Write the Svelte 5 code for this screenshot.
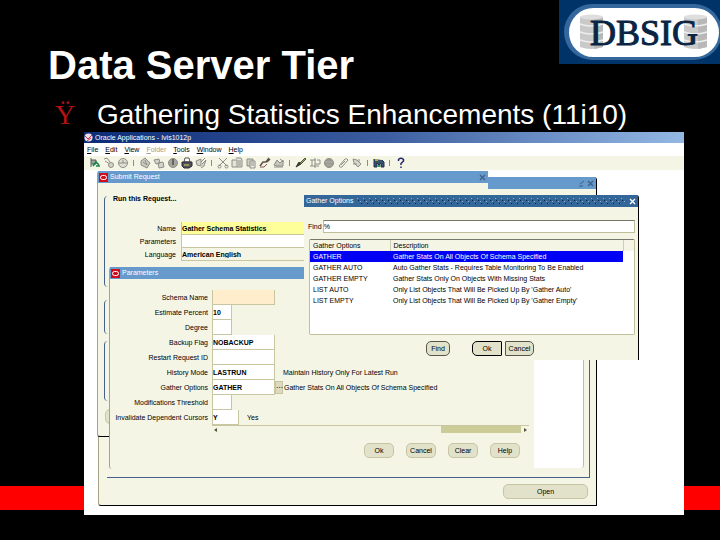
<script lang="ts">
    const menus = ['File', 'Edit', 'View', 'Folder', 'Tools', 'Window', 'Help'];

    const toolGroups = [
        ['new', 'find', 'clock'],
        ['save', 'step', 'responsibility', 'print', 'close'],
        ['cut', 'copy', 'paste', 'clear', 'delete'],
        ['edit', 'zoom', 'globe', 'attach', 'tools'],
        ['folder'],
        ['help'],
    ];

    const requestFields = [
        { id: 'name', label: 'Name', value: 'Gather Schema Statistics', kind: 'required' },
        { id: 'parameters', label: 'Parameters', value: '', kind: '' },
        { id: 'language', label: 'Language', value: 'American English', kind: 'locked' },
    ];

    const parameters = [
        { id: 'schema', label: 'Schema Name', value: '', size: 'wide', kind: 'active', note: '' },
        { id: 'percent', label: 'Estimate Percent', value: '10', size: 'narrow', kind: '', note: '' },
        { id: 'degree', label: 'Degree', value: '', size: 'narrow', kind: '', note: '' },
        { id: 'backup', label: 'Backup Flag', value: 'NOBACKUP', size: 'wide', kind: '', note: '' },
        { id: 'restart', label: 'Restart Request ID', value: '', size: 'wide', kind: '', note: '' },
        { id: 'history', label: 'History Mode', value: 'LASTRUN', size: 'wide', kind: '', note: 'Maintain History Only For Latest Run' },
        { id: 'options', label: 'Gather Options', value: 'GATHER', size: 'wide', kind: 'picker', note: 'Gather Stats On All Objects Of Schema Specified' },
        { id: 'threshold', label: 'Modifications Threshold', value: '', size: 'narrow', kind: '', note: '' },
        { id: 'invalidate', label: 'Invalidate Dependent Cursors', value: 'Y', size: 'short', kind: '', note: 'Yes' },
    ];

    const options = [
        ['GATHER', 'Gather Stats On All Objects Of Schema Specified'],
        ['GATHER AUTO', 'Auto Gather Stats - Requires Table Monitoring To Be Enabled'],
        ['GATHER EMPTY', 'Gather Stats Only On Objects With Missing Stats'],
        ['LIST AUTO', "Only List Objects That Will Be Picked Up By 'Gather Auto'"],
        ['LIST EMPTY', "Only List Objects That Will Be Picked Up By 'Gather Empty'"],
    ];

    let selected = $state(0);
</script>

{#snippet oracle()}
    <svg class="oracle" viewBox="0 0 9 9" aria-hidden="true">
        <rect width="9" height="9" fill="#cc1020" />
        <rect x="1.5" y="2.5" width="6" height="4" rx="2" fill="none" stroke="#fff" />
    </svg>
{/snippet}

{#snippet cross()}
    <svg class="cross" viewBox="0 0 7 7" aria-hidden="true">
        <path d="M1 1l5 5M6 1L1 6" stroke="currentColor" stroke-width="1.3" />
    </svg>
{/snippet}

{#snippet cylinder(x: number)}
    <g transform="translate({x} 14)">
        <path d="M0 3v30q11 4 23 0V3z" fill="#c9c9c9" />
        <path d="M14 3h9v30q-4 1-9 2z" fill="#b8b8b8" />
        <ellipse cx="11.5" cy="3" rx="11.5" ry="2.5" fill="#dedede" />
        <path d="M0 10q11 4 23 0M0 18q11 4 23 0M0 26q11 4 23 0" fill="none" stroke="#eee" stroke-width="1.5" />
    </g>
{/snippet}

{#snippet toolIcon(name: string)}
    <svg viewBox="0 0 12 12" fill="none" stroke="#8e8e86" aria-hidden="true">
        {#if name === 'new'}
            <path d="M2 1v9M2 3h5v4H2" stroke="#55605a" fill="#9ba49d" />
            <path d="M4 9l3-4 3 3M7 9h4" stroke="#16864a" stroke-width="1.6" />
        {:else if name === 'find'}
            <path d="M1 2l3-1 3 4M2 4l5 3" />
            <circle cx="8" cy="8" r="2.5" fill="#d4d4cb" />
        {:else if name === 'clock'}
            <circle cx="6" cy="6" r="4.5" fill="#deded6" />
            <path d="M2 6h8M6 3v3" />
        {:else if name === 'save'}
            <path d="M2 4l4-3 5 5-3 5-6-3z" fill="#c9c9c0" />
            <path d="M4 5l4 3M6 3l2 5" />
        {:else if name === 'step'}
            <path d="M1 3l5-1 1 4-4 1zM5 6l5-1 1 5-5 1z" fill="#d2d2ca" />
        {:else if name === 'responsibility'}
            <circle cx="6" cy="6" r="4.5" fill="#a5a59f" />
            <path d="M5 2h2v6H5z" fill="#66665f" stroke="none" />
        {:else if name === 'print'}
            <path d="M4 1h4l1 4H3z" fill="#fff" stroke="#555" />
            <path d="M1 5h10v4l-3 2H3L1 9z" fill="#54545f" stroke="#292937" />
            <path d="M3 8h5" stroke="#d6cf51" />
        {:else if name === 'close'}
            <path d="M1 4l5-2v7L2 8zM6 5l4-4M7 7l4-4-2 6-3 2" fill="#d5d5cd" />
        {:else if name === 'cut'}
            <path d="M2 1l8 8M10 1L2 9" />
            <circle cx="2.5" cy="9.5" r="1.5" />
            <circle cx="9.5" cy="9.5" r="1.5" />
        {:else if name === 'copy'}
            <path d="M1 3h5v7H1zM5 1h5l1 2v7H6" fill="#e4e4dc" />
            <path d="M7 4h3M7 6h3M7 8h3" />
        {:else if name === 'paste'}
            <path d="M2 2h6v7H2z" fill="#cfcfc6" />
            <path d="M5 4h5v7H5z" fill="#ecece4" />
            <path d="M6 6h3M6 8h3" />
        {:else if name === 'clear'}
            <path d="M1 9l3-4h3l3-4M8 5l3-3" stroke="#5e5145" stroke-width="1.5" />
            <path d="M1 10h4l3-3" stroke="#8b4c45" />
        {:else if name === 'delete'}
            <path d="M1 8l3-5 3 3 3-3v6H4z" fill="#c5c5bd" />
            <path d="M1 10h9M7 2l4 3" />
        {:else if name === 'edit'}
            <path d="M1 10l3-5 2 2z" fill="#38382e" stroke="#38382e" />
            <path d="M5 6l5-5 1 1-5 5" fill="#93a36c" stroke="#4f5c3c" />
        {:else if name === 'zoom'}
            <path d="M1 3h6M1 9h9M3 3v6M6 1v10M8 3h3v4H6" />
        {:else if name === 'globe'}
            <circle cx="6" cy="6" r="4.5" fill="#9c9c94" />
            <path d="M2 5h8M3 8h6" stroke="#adada5" />
        {:else if name === 'attach'}
            <path d="M2 9l6-7q2-1 3 1L5 10q-2 1-3-1zM4 8l4-4" />
        {:else if name === 'tools'}
            <path d="M2 2l4 1 4 4-3 3-4-4zM2 7h4M8 2v3" fill="#d5d5cc" />
        {:else if name === 'folder'}
            <path d="M1 2v8h3V6l2 2 2-2v4h3V5L9 3" fill="#39506c" stroke="#22304e" />
            <path d="M2 3h3" stroke="#b6ad29" stroke-width="2" />
            <path d="M6 10V8" stroke="#1e9a64" stroke-width="2" />
        {:else}
            <path d="M3.5 4V2.5Q6 0 8.5 2.5V4L6 6.5V8M6 9.5V11" stroke="#26266e" stroke-width="1.5" />
        {/if}
    </svg>
{/snippet}

<main class="slide">
    <div class="band"></div>

    <header>
        <h1>Data Server Tier</h1>
        <svg class="logo" viewBox="0 0 161 64" role="img" aria-label="DBSIG">
            <rect width="161" height="64" fill="#003468" />
            <rect x="5" y="4" width="158" height="56" rx="28" fill="#34689c" />
            <rect x="10" y="8" width="150" height="49" rx="24.5" fill="#fff" />
            {@render cylinder(21)}
            {@render cylinder(125)}
            <text x="31" y="45">DBSIG</text>
        </svg>
    </header>

    <p class="bullet"><span class="mark">Ÿ</span>Gathering Statistics Enhancements (11i10)</p>

    <section class="screen">
        <div class="app-title">
            <svg viewBox="0 0 9 9" aria-hidden="true">
                <circle cx="4.5" cy="4.5" r="4" fill="#f0dce4" />
                <path d="M1 3l3 3 4-4M3 8l4-3" fill="none" stroke="#bd3455" />
            </svg>
            <span>Oracle Applications - Ivis1012p</span>
        </div>

        <nav class="menu">
            {#each menus as menu}
                <button class:disabled={menu === 'Folder'}><u>{menu[0]}</u>{menu.slice(1)}</button>
            {/each}
        </nav>

        <div class="toolbar">
            {#each toolGroups as group, i}
                {#if i > 0}<i></i>{/if}
                {#each group as name}
                    <button aria-label={name}>{@render toolIcon(name)}</button>
                {/each}
            {/each}
        </div>

        <div class="desktop">
            <div class="window requests">
                <div class="bar">
                    <svg class="cross" viewBox="0 0 7 7" aria-hidden="true">
                        <path d="M1 6h4M2 4l4-3" stroke="currentColor" />
                    </svg>
                    {@render cross()}
                </div>
                <div class="frame">
                    <div class="sheet"></div>
                </div>
                <button class="pill open">Open</button>
            </div>

            <div class="window submit">
                <div class="bar">
                    {@render oracle()}
                    <span>Submit Request</span>
                    {@render cross()}
                </div>
                <div class="group run">
                    <h2>Run this Request...</h2>
                    {#each requestFields as field}
                        <div class="line">
                            <label for={field.id}>{field.label}</label>
                            <input id={field.id} class={field.kind} value={field.value} />
                        </div>
                    {/each}
                </div>
                <div class="group at"></div>
                <div class="group upon"></div>
                <button class="pill corner" aria-label="Help"></button>
            </div>

            <div class="window params">
                <div class="bar">
                    {@render oracle()}
                    <span>Parameters</span>
                </div>
                <form>
                    {#each parameters as field}
                        <div class="line">
                            <label for={field.id}>{field.label}</label>
                            <input id={field.id} class="{field.size} {field.kind}" value={field.value} />
                            {#if field.kind === 'picker'}<button type="button" class="lov" aria-label="List of values">&#8943;</button>{/if}
                            <span class="note">{field.note}</span>
                        </div>
                    {/each}
                </form>
                <div class="scroll">
                    <svg viewBox="0 0 8 8" aria-hidden="true"><path d="M5 2v4L2 4z" fill="#555540" /></svg>
                    <div class="thumb"></div>
                    <svg viewBox="0 0 8 8" aria-hidden="true"><path d="M3 2v4l3-2z" fill="#555540" /></svg>
                </div>
                <div class="actions">
                    <button class="pill">Ok</button>
                    <button class="pill">Cancel</button>
                    <button class="pill">Clear</button>
                    <button class="pill">Help</button>
                </div>
            </div>

            <div class="window gather">
                <div class="bar">
                    <span>Gather Options</span>
                    <div class="dots"></div>
                    {@render cross()}
                </div>
                <div class="search">
                    <label for="find">Find</label>
                    <input id="find" value="%" />
                </div>
                <div class="list">
                    <table>
                        <thead>
                            <tr><th>Gather Options</th><th>Description</th><th></th></tr>
                        </thead>
                        <tbody>
                            {#each options as [code, text], i}
                                <tr class:selected={selected === i} onclick={() => (selected = i)}>
                                    <td>{code}</td><td>{text}</td><td></td>
                                </tr>
                            {/each}
                        </tbody>
                    </table>
                </div>
                <div class="actions">
                    <button class="pill search-again">Find</button>
                    <button class="pill default">Ok</button>
                    <button class="pill cancel">Cancel</button>
                </div>
            </div>
        </div>
    </section>
</main>

<style>
    :global(body) {
        margin: 0;
        background: #000;
    }
    * {
        box-sizing: border-box;
    }
    .slide {
        position: relative;
        display: flex;
        flex-direction: column;
        min-height: 100vh;
        padding-bottom: 25px;
        background: #000;
        color: #fff;
        font-family: "Liberation Sans", Arial, sans-serif;
    }
    .band {
        position: absolute;
        left: 0;
        right: 0;
        bottom: 30px;
        height: 24px;
        background: #f00;
    }
    header {
        display: flex;
        justify-content: space-between;
        align-items: flex-start;
    }
    h1 {
        margin: 42px 0 0 48px;
        font-size: 40px;
        line-height: 46px;
    }
    .logo {
        width: 161px;
        height: 64px;
    }
    .logo text {
        font-family: "Liberation Serif", "Times New Roman", serif;
        font-size: 36px;
        fill: #0a2443;
        stroke: #0a2443;
        stroke-width: 1;
    }
    .bullet {
        display: flex;
        margin: 10px 0 0 55px;
        font-size: 28px;
        line-height: 34px;
        white-space: nowrap;
    }
    .mark {
        width: 42px;
        color: #b51212;
        font-family: "Liberation Serif", "Times New Roman", serif;
    }
    .screen {
        position: relative;
        display: flex;
        flex: 1;
        flex-direction: column;
        margin: 0 36px 0 84px;
        background: #fff;
        color: #000;
        font-size: 7px;
        line-height: 10px;
    }
    button, input {
        margin: 0;
        padding: 0;
        border: 0;
        border-radius: 0;
        background: none;
        color: inherit;
        font: inherit;
    }
    .app-title {
        display: flex;
        align-items: center;
        gap: 2px;
        height: 11px;
        background: linear-gradient(90deg, #0c2c78, #3c5ea0 50%, #93b8e4);
        color: #fff;
    }
    .app-title svg {
        width: 9px;
        height: 9px;
    }
    .menu {
        display: flex;
        gap: 7px;
        height: 13px;
        padding-left: 3px;
    }
    .menu .disabled {
        color: #a5a184;
    }
    .toolbar {
        display: flex;
        align-items: center;
        height: 14px;
        padding-left: 4px;
        background: #f5f5e6;
    }
    .toolbar button {
        display: flex;
        justify-content: center;
        width: 14px;
    }
    .toolbar svg {
        width: 12px;
        height: 12px;
    }
    .toolbar i {
        width: 1px;
        height: 6px;
        margin: 0 4px 0 3px;
        background: #8f8f7c;
    }
    .desktop {
        position: relative;
        flex: 1;
    }
    .window {
        position: absolute;
        background: #f5f5e6;
        border-left: 1px solid #a5a384;
        border-radius: 3px 3px 0 3px;
    }
    .bar {
        display: flex;
        align-items: center;
        gap: 2px;
        height: 12px;
        padding-right: 2px;
        background: #6699cc;
        color: #fff;
    }
    .oracle {
        width: 9px;
        height: 9px;
        margin-left: 1px;
    }
    .cross {
        width: 7px;
        height: 7px;
        color: #3f6083;
    }
    .bar span + .cross {
        margin-left: auto;
    }
    .pill {
        height: 15px;
        border: 1px solid #c6c6a4;
        border-radius: 5px;
        background: #e2e2cb;
        text-align: center;
    }
    .line {
        display: flex;
        align-items: center;
    }
    .line label {
        text-align: right;
    }
    .line input {
        border: solid #c9c7a2;
        border-width: 0 1px 1px;
        background: #fff;
        font-weight: bold;
    }

    .requests {
        left: 14px;
        top: 7px;
        width: 499px;
        border-right: 1px solid #000;
        border-bottom: 1px solid #000;
    }
    .requests .bar {
        justify-content: flex-end;
    }
    .frame {
        display: flex;
        justify-content: flex-end;
        height: 269px;
        margin: 20px 6px 0 8px;
        padding: 0 5px 9px 0;
        border: solid #45618a;
        border-width: 0 1px 1px 0;
    }
    .sheet {
        width: 60px;
        border-right: 1px solid #c1bf9b;
        border-radius: 0 0 3px 0;
        background: #fff;
    }
    .open {
        display: block;
        width: 85px;
        margin: 6px 8px 6px auto;
    }

    .submit {
        left: 13px;
        top: 1px;
        width: 391px;
        padding-bottom: 12px;
        border-bottom: 1px solid #000;
    }
    .group {
        margin-left: 6px;
        border-left: 1px solid #45618a;
        border-radius: 4px;
    }
    .run {
        height: 91px;
        margin-top: 13px;
    }
    .run h2 {
        margin: 0 0 20px;
        padding-left: 8px;
        font-size: 7px;
        line-height: 6px;
    }
    .run .line {
        gap: 5px;
        height: 13px;
    }
    .run label {
        width: 71px;
    }
    .run input {
        width: 200px;
        height: 13px;
    }
    .line .required {
        background: #ffff99;
    }
    .line .locked {
        background: #f5f5e6;
    }
    .at {
        height: 34px;
        margin-top: 13px;
    }
    .upon {
        height: 60px;
        margin-top: 7px;
    }
    .corner {
        display: block;
        width: 40px;
        margin: 8px 0 0 7px;
    }

    .params {
        left: 25px;
        top: 97px;
        width: 425px;
        padding-bottom: 11px;
    }
    form {
        padding-top: 11px;
    }
    form .line {
        height: 15px;
    }
    form label {
        width: 98px;
        margin-right: 4px;
    }
    form input {
        height: 15px;
    }
    .wide {
        width: 63px;
    }
    .narrow {
        width: 20px;
    }
    .short {
        width: 27px;
    }
    .line .active {
        background: #ffedcc;
    }
    .lov {
        width: 8px;
        height: 13px;
        border: 1px solid #c6c6a4;
        background: #dddac0;
        line-height: 8px;
    }
    .note {
        margin-left: 8px;
    }
    .lov + .note {
        margin-left: 1px;
    }
    .scroll {
        display: flex;
        height: 8px;
        margin: 0 5px 0 102px;
        border-top: 1px solid #c9c7a2;
    }
    .scroll svg {
        width: 8px;
        height: 8px;
    }
    .thumb {
        width: 80px;
        margin-left: auto;
        background: #cccc99;
    }
    .params .actions {
        display: flex;
        justify-content: flex-end;
        gap: 12px;
        margin: 10px 14px 0 0;
    }
    .params .pill {
        width: 30px;
    }

    .gather {
        left: 220px;
        top: 25px;
        width: 335px;
        padding-bottom: 4px;
        border-left: 0;
        border-right: 1px solid #000;
        border-radius: 0 3px 0 0;
    }
    .gather .bar {
        padding-left: 2px;
        background: #336699;
    }
    .gather .cross {
        color: #fff;
    }
    .dots {
        flex: 1;
        height: 6px;
        margin: 0 2px;
        background:
            conic-gradient(at 1px 1px, transparent 75%, #8fb2d3 0) 0 0 / 6px 6px,
            conic-gradient(at 1px 1px, transparent 75%, #8fb2d3 0) 3px 3px / 6px 6px,
            conic-gradient(at 1px 1px, transparent 75%, #0c2440 0) 1px 2px / 6px 6px,
            conic-gradient(at 1px 1px, transparent 75%, #0c2440 0) 4px 5px / 6px 6px;
    }
    .search {
        display: flex;
        gap: 1px;
        margin: 13px 3px 0 4px;
        line-height: 13px;
    }
    .search input {
        flex: 1;
        min-width: 0;
        height: 13px;
        border: 1px solid #c1bf9b;
        border-top-color: #77776a;
        background: #fff;
    }
    .list {
        height: 96px;
        margin: 6px 3px 0 5px;
        border: 1px solid #c1bf9b;
        border-top-color: #77776a;
        border-radius: 2px;
        background: #fff;
    }
    table {
        width: 100%;
        border-collapse: collapse;
        table-layout: fixed;
    }
    th, td {
        height: 11px;
        padding: 0 0 0 3px;
        font-weight: normal;
        line-height: 10px;
        text-align: left;
        white-space: nowrap;
    }
    th {
        background: #f5f5e6;
        border-right: 1px solid #d0ceb2;
    }
    th:first-child {
        width: 80px;
    }
    th:last-child {
        width: 11px;
        border-right: 0;
    }
    .selected td:not(:last-child) {
        background: #0000f5;
        color: #fff;
    }
    .gather .actions {
        display: flex;
        margin: 6px 104px 0 122px;
    }
    .search-again {
        width: 24px;
        border-color: #55554a;
    }
    .default {
        width: 30px;
        margin-left: auto;
        border-color: #000;
        border-radius: 5px 1px 1px 5px;
    }
    .cancel {
        width: 29px;
        margin-left: 3px;
        border-color: #55554a;
        border-radius: 1px 5px 5px 1px;
    }
</style>
